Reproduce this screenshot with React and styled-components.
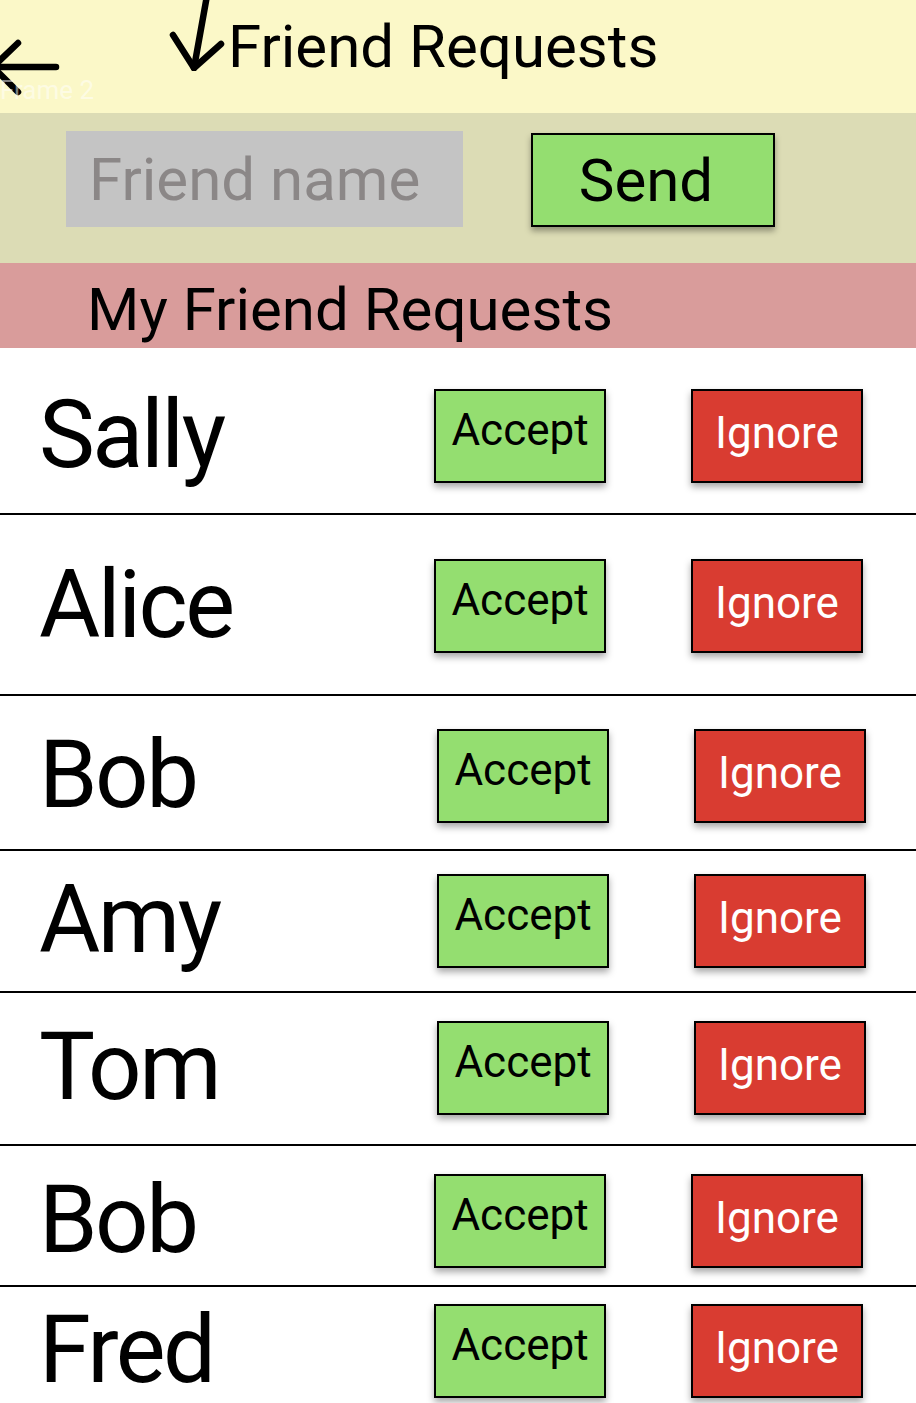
import React from 'react';
import styled, { createGlobalStyle } from 'styled-components';

const GlobalStyle = createGlobalStyle`
  html, body {
    margin: 0;
    padding: 0;
    background: #ffffff;
    overflow: hidden;
  }
  * {
    box-sizing: border-box;
  }
`;

const requests = [
  { name: 'Sally', height: 165, top: 41, shift: 0 },
  { name: 'Alice', height: 179, top: 44, shift: 0 },
  { name: 'Bob', height: 153, top: 33, shift: 3 },
  { name: 'Amy', height: 140, top: 23, shift: 3 },
  { name: 'Tom', height: 151, top: 28, shift: 3 },
  { name: 'Bob', height: 139, top: 28, shift: 0 },
  { name: 'Fred', height: 140, top: 17, shift: 0 },
];

function BackArrow() {
  return (
    <svg width='62' height='60' viewBox='0 0 62 60' aria-hidden='true'>
      <g fill='none' stroke='#000' strokeWidth='6.5' strokeLinecap='round' strokeLinejoin='round'>
        <line x1='-4' y1='29' x2='56' y2='29' />
        <polyline points='18,5 -7,29 18,54' />
      </g>
    </svg>
  );
}

function DownArrow() {
  return (
    <svg width='60' height='75' viewBox='0 0 60 75' aria-hidden='true'>
      <g fill='none' stroke='#000' strokeWidth='6.5' strokeLinecap='round' strokeLinejoin='round'>
        <line x1='40' y1='-6' x2='26' y2='72' />
        <polyline points='5,39 26,72 53,48' />
      </g>
    </svg>
  );
}

function RequestRow({ name, height, top, shift }) {
  return (
    <Row height={height} top={top}>
      <Name>{name}</Name>
      <Actions shift={shift}>
        <ActionButton variant='accept'>Accept</ActionButton>
        <ActionButton variant='ignore'>Ignore</ActionButton>
      </Actions>
    </Row>
  );
}

export default function App() {
  return (
    <>
      <GlobalStyle />
      <Page>
        <Header>
          <FrameLabel>Frame 2</FrameLabel>
          <BackIcon>
            <BackArrow />
          </BackIcon>
          <DownIcon>
            <DownArrow />
          </DownIcon>
          <Title>Friend Requests</Title>
        </Header>
        <SendBar>
          <NameInput placeholder='Friend name' />
          <SendButton>Send</SendButton>
        </SendBar>
        <SectionTitle>My Friend Requests</SectionTitle>
        <List>
          {requests.map((r, i) => (
            <RequestRow key={i} {...r} />
          ))}
        </List>
      </Page>
    </>
  );
}

const Page = styled.div`
  width: 916px;
  height: 1403px;
  overflow: hidden;
  font-family: Roboto, 'Liberation Sans', sans-serif;
  color: #000;
`;

const Header = styled.header`
  position: relative;
  display: flex;
  align-items: flex-start;
  height: 113px;
  background: #fbf8c8;
`;

const FrameLabel = styled.span`
  position: absolute;
  left: 0;
  top: 73px;
  font-size: 26px;
  line-height: 34px;
  color: rgba(255, 255, 255, 0.5);
`;

const BackIcon = styled.div`
  display: flex;
  margin-top: 38px;
  width: 62px;
`;

const DownIcon = styled.div`
  display: flex;
  margin-left: 106px;
  margin-top: -4px;
`;

const Title = styled.h1`
  margin: 17px 0 0 0;
  font-size: 60px;
  font-weight: 400;
  line-height: 60px;
`;

const SendBar = styled.div`
  display: flex;
  align-items: flex-start;
  height: 150px;
  padding: 18px 0 0 66px;
  background: #dcdcb5;
`;

const NameInput = styled.input`
  width: 397px;
  height: 96px;
  padding: 0 0 0 23px;
  border: none;
  outline: none;
  background: #c4c4c4;
  font-family: inherit;
  font-size: 60px;
  color: #000;
  &::placeholder {
    color: #8b8787;
  }
`;

const SendButton = styled.button`
  margin: 2px 0 0 68px;
  width: 244px;
  height: 94px;
  padding: 0 14px 0 0;
  border: 2px solid #000;
  background: #94de70;
  font-family: inherit;
  font-size: 60px;
  color: #000;
  box-shadow: 0 4px 6px rgba(0, 0, 0, 0.35);
`;

const SectionTitle = styled.h2`
  margin: 0;
  height: 85px;
  padding: 17px 0 0 87px;
  background: #d99c9b;
  font-size: 60px;
  font-weight: 400;
  line-height: 60px;
`;

const List = styled.div`
  display: flex;
  flex-direction: column;
`;

const Row = styled.div`
  display: flex;
  flex: 0 0 auto;
  align-items: flex-start;
  height: ${({ height }) => height + 2}px;
  padding: ${({ top }) => top}px 0 0 39px;
  border-bottom: 2px solid #000;
`;

const Name = styled.div`
  width: 395px;
  height: 93px;
  font-size: 94px;
  letter-spacing: -2.5px;
  line-height: 93px;
`;

const Actions = styled.div`
  display: flex;
  gap: 85px;
  margin-left: ${({ shift }) => shift}px;
`;

const ActionButton = styled.button`
  width: 172px;
  height: 94px;
  padding: 0 0 ${({ variant }) => (variant === 'accept' ? 12 : 6)}px;
  border: 2px solid #000;
  background: ${({ variant }) => (variant === 'accept' ? '#94de70' : '#d93c31')};
  color: ${({ variant }) => (variant === 'accept' ? '#000' : '#fff')};
  font-family: Roboto, 'Liberation Sans', sans-serif;
  font-size: 44px;
  box-shadow: 0 4px 7px rgba(0, 0, 0, 0.35);
`;
